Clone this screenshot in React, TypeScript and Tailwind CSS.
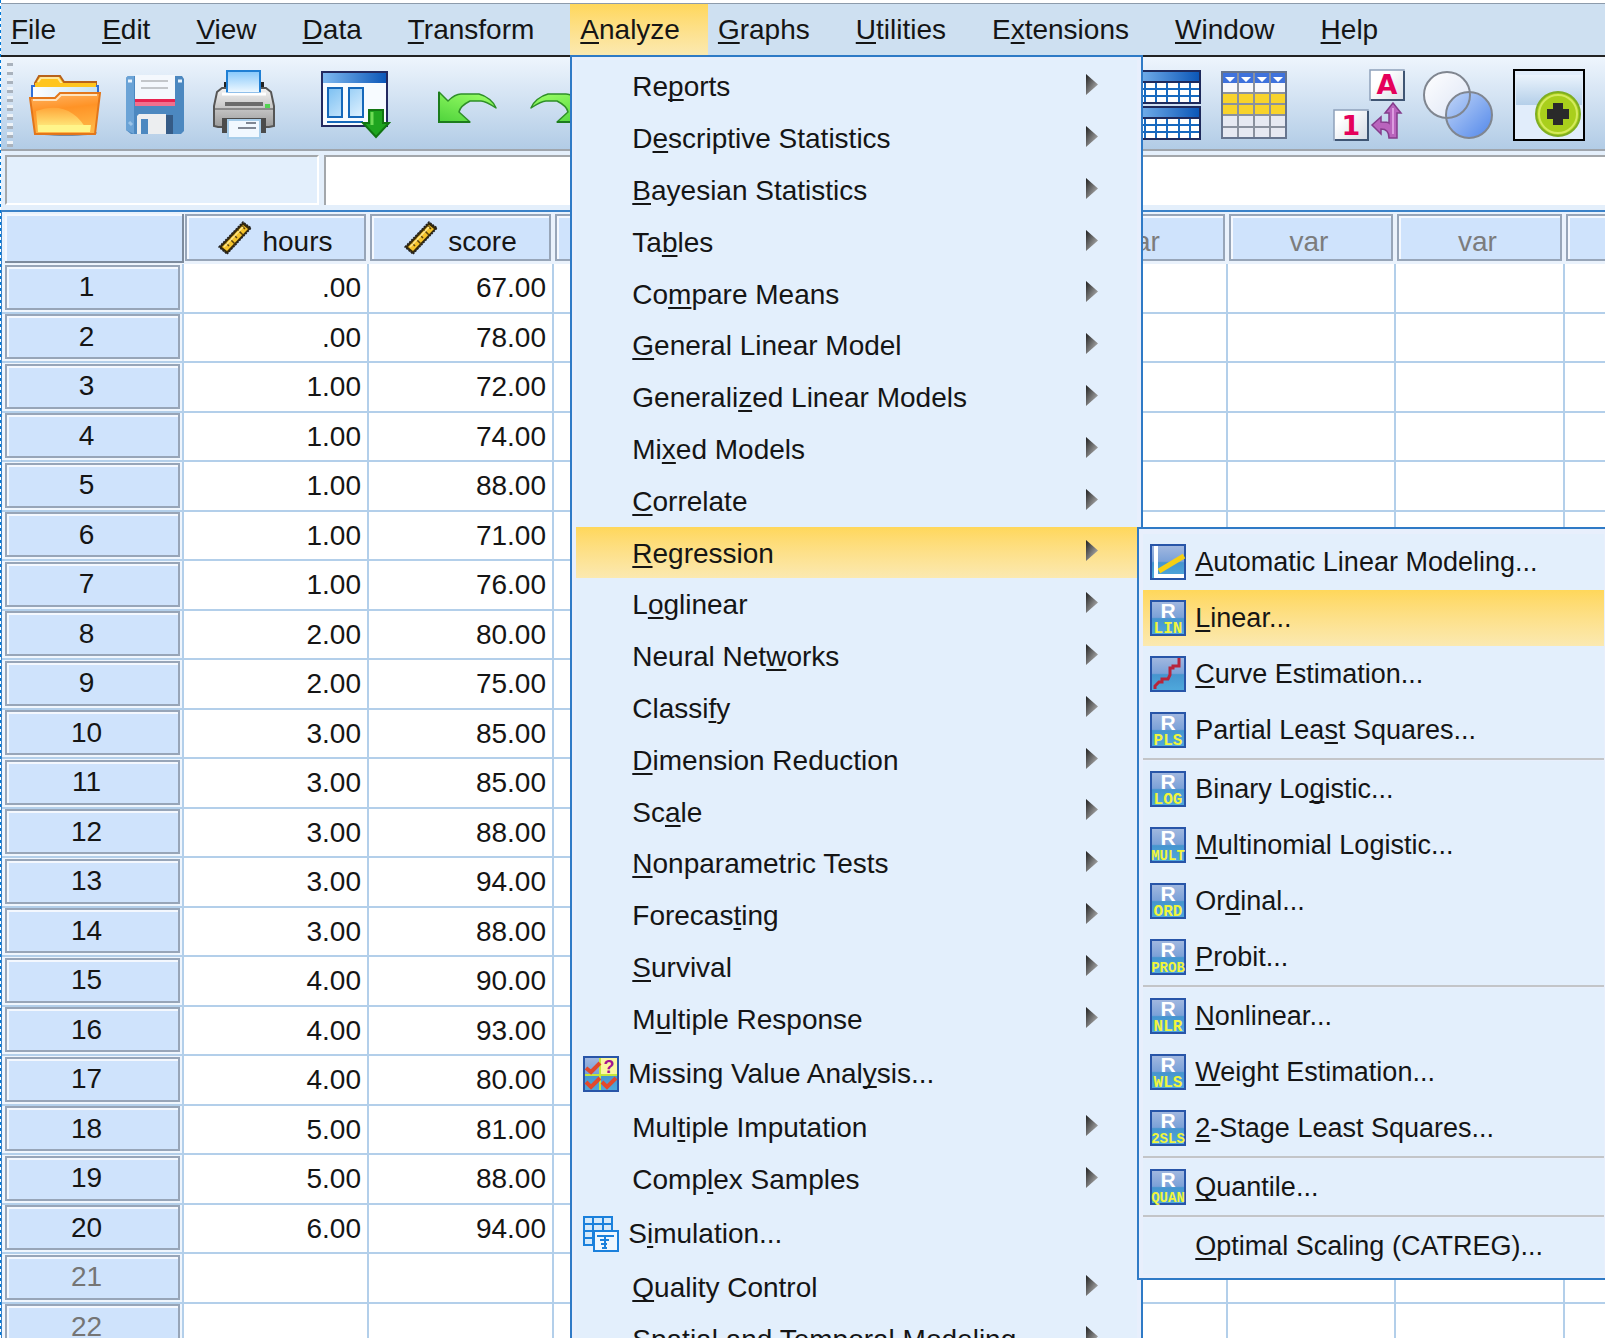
import type { ReactNode } from "react";
import clsx from "clsx";

const MENUS = [
  "&File", "&Edit", "&View", "&Data", "&Transform", "&Analyze",
  "&Graphs", "&Utilities", "E&xtensions", "&Window", "&Help",
];

type AnalyzeItem = { label: string; icon?: "missing" | "simulation"; open?: boolean };

const ANALYZE_ITEMS: AnalyzeItem[] = [
  { label: "Re&ports" },
  { label: "D&escriptive Statistics" },
  { label: "&Bayesian Statistics" },
  { label: "Ta&bles" },
  { label: "Co&mpare Means" },
  { label: "&General Linear Model" },
  { label: "Generali&zed Linear Models" },
  { label: "Mi&xed Models" },
  { label: "&Correlate" },
  { label: "&Regression", open: true },
  { label: "L&oglinear" },
  { label: "Neural Net&works" },
  { label: "Classi&fy" },
  { label: "&Dimension Reduction" },
  { label: "Sc&ale" },
  { label: "&Nonparametric Tests" },
  { label: "Forecas&ting" },
  { label: "&Survival" },
  { label: "M&ultiple Response" },
  { label: "Missing Value Anal&ysis...", icon: "missing" },
  { label: "Mul&tiple Imputation" },
  { label: "Comp&lex Samples" },
  { label: "S&imulation...", icon: "simulation" },
  { label: "&Quality Control" },
  { label: "Spatial and Temporal Modelin&g" },
];

type RegressionItem = { label: string; code?: string; active?: boolean; lineAfter?: boolean };

const REGRESSION_ITEMS: RegressionItem[] = [
  { label: "&Automatic Linear Modeling...", code: "auto" },
  { label: "&Linear...", code: "LIN", active: true },
  { label: "&Curve Estimation...", code: "curve" },
  { label: "Partial Lea&st Squares...", code: "PLS", lineAfter: true },
  { label: "Binary Lo&gistic...", code: "LOG" },
  { label: "&Multinomial Logistic...", code: "MULT" },
  { label: "Or&dinal...", code: "ORD" },
  { label: "&Probit...", code: "PROB", lineAfter: true },
  { label: "&Nonlinear...", code: "NLR" },
  { label: "&Weight Estimation...", code: "WLS" },
  { label: "&2-Stage Least Squares...", code: "2SLS", lineAfter: true },
  { label: "&Quantile...", code: "QUAN", lineAfter: true },
  { label: "&Optimal Scaling (CATREG)..." },
];

const DATA: [string, string][] = [
  [".00", "67.00"], [".00", "78.00"], ["1.00", "72.00"], ["1.00", "74.00"], ["1.00", "88.00"],
  ["1.00", "71.00"], ["1.00", "76.00"], ["2.00", "80.00"], ["2.00", "75.00"], ["3.00", "85.00"],
  ["3.00", "85.00"], ["3.00", "88.00"], ["3.00", "94.00"], ["3.00", "88.00"], ["4.00", "90.00"],
  ["4.00", "93.00"], ["4.00", "80.00"], ["5.00", "81.00"], ["5.00", "88.00"], ["6.00", "94.00"],
];

const ROW_COUNT = 22;
const EMPTY_COLS = [0, 1, 2, 3, 4, 5, 6];

// "&" marks the access key, as in native menus
function Mnemonic({ text }: { text: string }) {
  const i = text.indexOf("&");
  return (
    <span className="whitespace-pre">
      {text.slice(0, i)}
      <span className="underline decoration-2 underline-offset-3 [text-decoration-skip-ink:none]">{text[i + 1]}</span>
      {text.slice(i + 2)}
    </span>
  );
}

function Ruler() {
  return (
    <svg width="34" height="34" viewBox="0 0 34 34" aria-hidden="true">
      <path d="M1 26L25 1l8 6L9 33z" fill="#3a2c0a" stroke="#222" strokeWidth="1.5" strokeDasharray="2 1" />
      <path d="M4 26L25 4l5 4L9 30z" fill="#f5c32c" />
      <path d="M8 22l3 3M12 18l5 5M16 14l3 3M20 9l5 5M24 5l3 3" stroke="#5b420a" strokeWidth="1.5" />
      <path d="M6 26L25 6" stroke="#fde58a" strokeWidth="1.5" />
    </svg>
  );
}

function FolderIcon() {
  return (
    <svg width="72" height="64" viewBox="0 0 72 64" aria-hidden="true">
      <defs>
        <linearGradient id="folderFront" x1="0" y1="0" x2="0.2" y2="1">
          <stop offset="0" stopColor="#ffb668" />
          <stop offset="0.45" stopColor="#ff9326" />
          <stop offset="1" stopColor="#ffb545" />
        </linearGradient>
        <linearGradient id="folderGlow" x1="0" y1="0" x2="0" y2="1">
          <stop offset="0" stopColor="#ffa63a" />
          <stop offset="1" stopColor="#fffb8c" />
        </linearGradient>
        <linearGradient id="paper" x1="0" y1="0" x2="1" y2="0">
          <stop offset="0" stopColor="#fff" />
          <stop offset="1" stopColor="#c3e2f8" />
        </linearGradient>
      </defs>
      <ellipse cx="37" cy="60" rx="31" ry="3" fill="#4a5a70" opacity="0.6" />
      <path d="M6 22V10l4-7h21l4 6h32v14z" fill="#ffc51f" stroke="#b8621b" strokeWidth="2" />
      <path d="M9 9l3-4h17l4 6h30" fill="none" stroke="#ffe79a" strokeWidth="2" />
      <path d="M3 13h66v14H3z" fill="url(#paper)" stroke="#2f6fd8" strokeWidth="2" />
      <path d="M6 14V10h61v4z" fill="#ffc51f" />
      <path d="M1 25h25l5-5h40l-5 41H6z" fill="url(#folderFront)" stroke="#e2761b" strokeWidth="2" />
      <path d="M4 27h23l5-5h36" fill="none" stroke="#ffe3bd" strokeWidth="2" />
      <path d="M7 38c22-8 40-2 52 21H9z" fill="url(#folderGlow)" />
      <path d="M9 52h53l-1 7H9z" fill="#fff58a" />
    </svg>
  );
}

function SaveIcon() {
  return (
    <svg width="60" height="60" viewBox="0 0 60 60" aria-hidden="true">
      <path d="M3 1h54l2 3v52l-3 3H6l-5-4V3z" fill="#4c88c0" />
      <path d="M3 1h6v58l-8-4V3z" fill="#6ba3d6" />
      <path d="M10 0h40v31H10z" fill="#f4f8fd" />
      <path d="M10 24h40v3H10z" fill="#e8224f" />
      <path d="M10 27h40v4H10z" fill="#f1708d" />
      <path d="M16 6h27M16 13h27" stroke="#c3c6ca" strokeWidth="2" />
      <path d="M3 6h4M53 6h4" stroke="#e9f4fd" strokeWidth="3" />
      <path d="M41 40h7v19h-7z" fill="#355b86" />
      <path d="M12 41l2-2h27v20H12z" fill="#eceef0" />
      <path d="M16 44h7v15h-7z" fill="#4c88c0" />
      <path d="M4 47l3 3" stroke="#9cc4e8" strokeWidth="3" />
    </svg>
  );
}

function PrintIcon() {
  return (
    <svg width="62" height="70" viewBox="0 0 62 70" aria-hidden="true">
      <defs>
        <linearGradient id="printerBody" x1="0" y1="0" x2="0" y2="1">
          <stop offset="0" stopColor="#f3f3f3" />
          <stop offset="1" stopColor="#9b9b9b" />
        </linearGradient>
        <linearGradient id="printerSheet" x1="0" y1="0" x2="0" y2="1">
          <stop offset="0" stopColor="#86c8fb" />
          <stop offset="1" stopColor="#f2faff" />
        </linearGradient>
      </defs>
      <path d="M11 12h4v10h-4zM47 12h4v10h-4z" fill="#222" />
      <path d="M4 22l5-4h44l5 4 3 14v20l-5 1H5l-4-1V36z" fill="url(#printerBody)" stroke="#555" strokeWidth="2" />
      <path d="M14 1h33v22H14z" fill="url(#printerSheet)" stroke="#1f7fd4" strokeWidth="2" />
      <path d="M9 24h44" stroke="#fff" strokeWidth="3" />
      <path d="M12 34h38" stroke="#6b6b6b" strokeWidth="4" />
      <path d="M2 39h58" stroke="#777" strokeWidth="1.5" />
      <path d="M52 36h5" stroke="#52d352" strokeWidth="4" />
      <path d="M9 48h44v15H9z" fill="#4b4b4b" />
      <path d="M15 50h32v18H15z" fill="#f1f8ff" stroke="#a7cdea" strokeWidth="2" />
      <path d="M33 53h10M25 58h18" stroke="#7f8794" strokeWidth="2" />
    </svg>
  );
}

function RecallIcon() {
  return (
    <svg width="70" height="68" viewBox="0 0 70 68" aria-hidden="true">
      <defs>
        <linearGradient id="titleBar" x1="0" y1="0" x2="1" y2="0">
          <stop offset="0" stopColor="#7fb9f0" />
          <stop offset="1" stopColor="#0c57b8" />
        </linearGradient>
        <linearGradient id="pane" x1="0" y1="0" x2="1" y2="1">
          <stop offset="0" stopColor="#7cc0f2" />
          <stop offset="1" stopColor="#e0f2ff" />
        </linearGradient>
      </defs>
      <path d="M1 1h65v54H1z" fill="#f7fbff" stroke="#232a60" strokeWidth="2" />
      <path d="M2 2h63v10H2z" fill="url(#titleBar)" />
      <path d="M7 17h14v29H7zM28 17h14v29H28z" fill="url(#pane)" stroke="#1568ba" strokeWidth="2" />
      <path d="M6 51h36" stroke="#1568ba" strokeWidth="2" />
      <path d="M48 39h14v13h6L55 66 42 52h6z" fill="#1fa51f" stroke="#127512" strokeWidth="2" />
      <path d="M51 41v13" stroke="#6edc55" strokeWidth="3" />
    </svg>
  );
}

function CurvedArrow({ flip }: { flip?: boolean }) {
  return (
    <svg width="60" height="32" viewBox="0 0 60 32" className={flip ? "-scale-x-100" : undefined} aria-hidden="true">
      <defs>
        <linearGradient id="leaf" x1="0" y1="1" x2="0.6" y2="0">
          <stop offset="0" stopColor="#4fd33c" />
          <stop offset="1" stopColor="#93fa62" />
        </linearGradient>
      </defs>
      <path
        d="M1 1l9 9C14 6 19 3 23 3h18c8 2 15 8 17 14C52 13 47 10 43 10H32c-6 3-10 6-11 11l11 10H1z"
        fill="url(#leaf)"
        stroke="#2f8f28"
        strokeWidth="1.5"
        strokeLinejoin="round"
      />
      <path d="M1 1v30h31" fill="none" stroke="#1d7c1c" strokeWidth="2" />
    </svg>
  );
}

function SplitIcon() {
  return (
    <svg width="70" height="70" viewBox="0 0 70 70" aria-hidden="true">
      {[0, 36].map((y) => (
        <g key={y} transform={`translate(0 ${y})`}>
          <path d="M1 1h68v32H1z" fill="#fff" stroke="#1e2a5c" strokeWidth="2" />
          <path d="M2 2h66v9H2z" fill="url(#titleBar)" />
          <path d="M1 12h68" stroke="#1e2a5c" strokeWidth="2" />
          <path d="M2 19h66M2 26h66M14 13v19M25 13v19M36 13v19M48 13v19M59 13v19" stroke="#1769bf" strokeWidth="2" />
        </g>
      ))}
    </svg>
  );
}

function SelectCasesIcon() {
  return (
    <svg width="66" height="68" viewBox="0 0 66 68" aria-hidden="true">
      <path d="M1 1h64v66H1z" fill="#f7f8fb" stroke="#66758f" strokeWidth="2" />
      <path d="M1 1h64v11H1z" fill="#3f72dc" />
      <path d="M2 22h62v22H2z" fill="#f8d32b" />
      <path d="M2 44h62v23H2z" fill="#e6e9f2" />
      <path d="M1 22h64M1 33h64M1 44h64M1 56h64M17 1v66M33 1v66M49 1v66" stroke="#8a919e" strokeWidth="2" />
      <path d="M4 6h10l-5 5zM20 6h10l-5 5zM36 6h10l-5 5zM52 6h10l-5 5z" fill="#fff" />
      <path d="M1 1h64v66H1z" fill="none" stroke="#66758f" strokeWidth="2" />
    </svg>
  );
}

function ValueLabelsIcon() {
  return (
    <svg width="72" height="72" viewBox="0 0 72 72" aria-hidden="true">
      <defs>
        <linearGradient id="tile" x1="0" y1="0" x2="1" y2="1">
          <stop offset="0.4" stopColor="#fff" />
          <stop offset="1" stopColor="#b3bfd0" />
        </linearGradient>
      </defs>
      <path d="M37 1h34v30H37zM1 41h34v30H1z" fill="url(#tile)" stroke="#8fa1bb" strokeWidth="1.5" />
      <path d="M38 31h33V2M2 71h33V42" fill="none" stroke="#3f5573" strokeWidth="2" />
      <text x="54" y="25" textAnchor="middle" fontSize="27" className="fill-[#e5005a] font-[DejaVu_Sans] font-bold">A</text>
      <text x="18" y="66" textAnchor="middle" fontSize="27" className="fill-[#e5005a] font-[DejaVu_Sans] font-bold">1</text>
      <path
        d="M60 34l8 10h-4v25h-8c0-6-3-9-8-9v5l-9-9 9-8v5c4 0 7 0 8 1V44h-4z"
        fill="#b964bd"
        stroke="#843d8c"
        strokeWidth="1.5"
      />
      <path d="M60 39v26" stroke="#dc9ce0" strokeWidth="2" />
    </svg>
  );
}

function SetsIcon() {
  return (
    <svg width="70" height="68" viewBox="0 0 70 68" aria-hidden="true">
      <defs>
        <linearGradient id="setA" x1="0" y1="0" x2="1" y2="1">
          <stop offset="0" stopColor="#fff" />
          <stop offset="1" stopColor="#dce4f5" />
        </linearGradient>
        <linearGradient id="setB" x1="0" y1="0" x2="1" y2="1">
          <stop offset="0" stopColor="#c3d7f8" />
          <stop offset="1" stopColor="#5187ea" />
        </linearGradient>
      </defs>
      <circle cx="24" cy="24" r="23" fill="url(#setA)" />
      <circle cx="46" cy="44" r="23" fill="url(#setB)" />
      <circle cx="24" cy="24" r="23" fill="none" stroke="#808690" strokeWidth="2" />
      <circle cx="46" cy="44" r="23" fill="none" stroke="#808690" strokeWidth="2" />
    </svg>
  );
}

function AddIcon() {
  return (
    <svg width="72" height="72" viewBox="0 0 72 72" aria-hidden="true">
      <defs>
        <linearGradient id="addTop" x1="0" y1="0" x2="0" y2="1">
          <stop offset="0" stopColor="#eaf3fc" />
          <stop offset="1" stopColor="#b4cfe9" />
        </linearGradient>
      </defs>
      <path d="M1 1h70v70H1z" fill="#e1edfb" stroke="#000" strokeWidth="2" />
      <path d="M3 6h66v30H3z" fill="url(#addTop)" />
      <circle cx="45" cy="45" r="22" fill="#a9cf1c" stroke="#7fae22" strokeWidth="2" />
      <circle cx="45" cy="45" r="19" fill="none" stroke="#d4ea5c" strokeWidth="2" />
      <path d="M40 34h10v6h6v10h-6v6H40v-6h-6V40h6z" fill="#2a2a2a" />
    </svg>
  );
}

function RegressionIcon({ code }: { code?: string }) {
  if (!code) return <span className="size-9" />;
  return (
    <svg width="36" height="36" viewBox="0 0 36 36" className="shrink-0" aria-hidden="true">
      <defs>
        <linearGradient id="chip" x1="0" y1="0" x2="0" y2="1">
          <stop offset="0" stopColor="#a3b9e0" />
          <stop offset="0.48" stopColor="#7ba1d8" />
          <stop offset="0.52" stopColor="#4595cf" />
          <stop offset="1" stopColor="#4fa9dc" />
        </linearGradient>
      </defs>
      <path d="M1 1h34v34H1z" fill="url(#chip)" stroke="#2855a8" strokeWidth="2" />
      {code === "auto" && (
        <>
          <path d="M6 2v30h28" fill="none" stroke="#fff" strokeWidth="4" />
          <path d="M9 27L34 12" stroke="#f6cf12" strokeWidth="5" />
        </>
      )}
      {code === "curve" && (
        <path d="M5 33v-3l4-4h3v-3h6l2-4v-7h3v-2h6V2" fill="none" stroke="#b8243a" strokeWidth="3" />
      )}
      {code !== "auto" && code !== "curve" && (
        <>
          <text x="18" y="18" textAnchor="middle" fontSize="21" className="fill-white font-bold">R</text>
          <text
            x="18"
            y="33"
            textAnchor="middle"
            fontSize={code.length > 3 ? 14 : 16}
            className="fill-[#f1f53c] font-['Liberation_Mono',monospace] font-bold"
          >
            {code}
          </text>
        </>
      )}
    </svg>
  );
}

function MissingIcon() {
  return (
    <svg width="36" height="36" viewBox="0 0 36 36" className="shrink-0" aria-hidden="true">
      <path d="M1 1h34v34H1z" fill="url(#chip)" stroke="#2855a8" strokeWidth="2" />
      <path d="M18 2h16v16H18z" fill="#fbf7a0" />
      <path d="M2 19h32M17 2v32" stroke="#c5e63a" strokeWidth="2" />
      <text x="26" y="17" textAnchor="middle" fontSize="18" className="fill-[#a2148f] font-bold">?</text>
      <path d="M3 12l5 4 9-9M3 26l5 5 9-9M19 26l5 5 9-9" fill="none" stroke="#e2492c" strokeWidth="4" />
    </svg>
  );
}

function SimulationIcon() {
  return (
    <svg width="36" height="36" viewBox="0 0 36 36" className="shrink-0" aria-hidden="true">
      <path d="M1 1h28v28H1z" fill="#d5e9fa" stroke="#1a80dc" strokeWidth="2" />
      <path d="M1 8h28M1 15h28M1 22h28M10 1v28M20 1v28" stroke="#1a80dc" strokeWidth="2" />
      <path d="M11 15h24v20H11z" fill="#eff7fe" stroke="#1a80dc" strokeWidth="2" />
      <path d="M14 20h7M22 20h9M17 24h9M18 28h6M19 32h5M22 19v14" stroke="#1a80dc" strokeWidth="2" />
    </svg>
  );
}

function SubmenuArrow() {
  return (
    <svg width="12" height="21" viewBox="0 0 12 21" className="mb-[6px]" aria-hidden="true">
      <defs>
        <linearGradient id="arrow" x1="0" y1="0" x2="1" y2="1">
          <stop offset="0" stopColor="#1f1f1f" />
          <stop offset="1" stopColor="#c9c9c9" />
        </linearGradient>
      </defs>
      <path d="M0 0l12 10.5L0 21z" fill="url(#arrow)" />
    </svg>
  );
}

function ToolButton({ label, className, children }: { label: string; className?: string; children: ReactNode }) {
  return (
    <button type="button" aria-label={label} className={clsx("shrink-0", className)}>
      {children}
    </button>
  );
}

function RegressionMenu() {
  return (
    <div role="menu" className="absolute left-full top-0 z-20 w-[473px] border-2 border-[#2f7ac6] bg-[#e8effc] px-1 pb-1 pt-[5px]">
      {REGRESSION_ITEMS.map((item) => (
        <div key={item.label} role="none">
          <button
            type="button"
            role="menuitem"
            className={clsx(
              "flex h-14 w-full items-center gap-[9px] pl-[7px] text-[27px]",
              item.active ? "bg-linear-to-b from-[#ffd75a] to-[#fbe9b0]" : "bg-[#e3effc]"
            )}
          >
            <RegressionIcon code={item.code} />
            <Mnemonic text={item.label} />
          </button>
          {item.lineAfter && <div className="mb-px h-[2px] bg-[#c3c5c8]" />}
        </div>
      ))}
    </div>
  );
}

function AnalyzeMenu() {
  return (
    <div role="menu" className="absolute left-0 top-full z-10 w-[573px] border-2 border-[#2f7ac6] bg-[#e8effc] px-1 pt-[3px]">
      {ANALYZE_ITEMS.map((item) => (
        <div
          key={item.label}
          role="none"
          className={clsx("relative", item.icon ? "h-14" : "h-[52px] nth-[5n]:h-[51px]")}
        >
          <button
            type="button"
            role="menuitem"
            className={clsx(
              "flex h-full w-full items-center pr-[39px] pt-[2px]",
              item.icon ? "gap-[9px] pl-[7px]" : "justify-between pl-14",
              item.open ? "bg-linear-to-b from-[#ffd75a] to-[#fbe9b0]" : "bg-[#e3effc]"
            )}
          >
            {item.icon === "missing" && <MissingIcon />}
            {item.icon === "simulation" && <SimulationIcon />}
            <Mnemonic text={item.label} />
            {!item.icon && <SubmenuArrow />}
          </button>
          {item.open && <RegressionMenu />}
        </div>
      ))}
    </div>
  );
}

function MenuBar() {
  return (
    <nav className="mt-[3px] flex h-[54px] border-b-2 border-t border-b-[#222] border-t-[#8d9bab] bg-[#cee0f1]">
      {MENUS.map((menu) => {
        const active = menu === "&Analyze";
        return (
          <div key={menu} className="relative">
            <button
              type="button"
              className={clsx(
                "h-full pl-[10px]",
                active ? "bg-linear-to-b from-[#ffd75a] to-[#fbe9b0] pr-7" : "pr-9"
              )}
            >
              <Mnemonic text={menu} />
            </button>
            {active && <AnalyzeMenu />}
          </div>
        );
      })}
    </nav>
  );
}

function Toolbar() {
  return (
    <div className="flex h-[94px] items-center border-b-2 border-[#9fa5ac] bg-linear-to-b from-[#eef5fd] to-[#b2cce6] pl-[6px] pt-[3px]">
      <div className="h-full w-[6px] bg-[repeating-linear-gradient(to_bottom,#eef3f8_0_3px,#a9b2bd_3px_6px,transparent_6px_9px)]" />
      <ToolButton label="Open data document" className="ml-4"><FolderIcon /></ToolButton>
      <ToolButton label="Save this document" className="ml-6"><SaveIcon /></ToolButton>
      <ToolButton label="Print" className="ml-7"><PrintIcon /></ToolButton>
      <ToolButton label="Recall recently used dialogs" className="ml-[46px]"><RecallIcon /></ToolButton>
      <ToolButton label="Undo" className="ml-[47px] mt-1"><CurvedArrow /></ToolButton>
      <ToolButton label="Redo" className="ml-[31px] mt-1"><CurvedArrow flip /></ToolButton>
      <ToolButton label="Split file" className="ml-[542px]"><SplitIcon /></ToolButton>
      <ToolButton label="Select cases" className="ml-5"><SelectCasesIcon /></ToolButton>
      <ToolButton label="Value labels" className="ml-[46px]"><ValueLabelsIcon /></ToolButton>
      <ToolButton label="Use variable sets" className="ml-[18px]"><SetsIcon /></ToolButton>
      <ToolButton label="Customize toolbar" className="ml-5"><AddIcon /></ToolButton>
    </div>
  );
}

function HeaderBox({ className, children }: { className?: string; children?: ReactNode }) {
  return (
    <div
      className={clsx(
        "flex items-center justify-center border-2 border-[#97a5b8] bg-[#cfe3fc] shadow-[inset_2px_2px_0_#f4f8fe]",
        className
      )}
    >
      {children}
    </div>
  );
}

function DataGrid() {
  return (
    <div className="border-l border-t-2 border-[#3b82c8]">
      <table className="w-full min-w-[1733px] table-fixed border-separate border-spacing-0 bg-white">
        <colgroup>
          <col className="w-[182px]" />
          <col className="w-[185px]" />
          <col className="w-[185px]" />
          {/* the last column takes whatever is left */}
          {EMPTY_COLS.map((c) => (
            <col key={c} className={c === 6 ? undefined : c % 2 === 0 ? "w-[168px]" : "w-[169px]"} />
          ))}
        </colgroup>
        <thead>
          <tr className="h-[52px] bg-[#eaf2fc]">
            <td className="p-0 pb-px pl-[3px] pt-[2px]">
              <div className="h-[49px] border-b-2 border-r-2 border-[#7d8b9d] bg-[#cfe3fc] shadow-[inset_2px_2px_0_#f4f8fe]" />
            </td>
            {["hours", "score"].map((name) => (
              <th key={name} scope="col" className="p-0 pb-[3px] pl-px pr-[3px] pt-[2px] font-normal">
                <HeaderBox className="h-[47px] gap-[10px]">
                  <Ruler />
                  <span className="pt-2">{name}</span>
                </HeaderBox>
              </th>
            ))}
            {EMPTY_COLS.map((c) => (
              <th key={c} scope="col" className="p-0 pb-[3px] pl-px pr-[3px] pt-[2px] font-normal text-[#7c7c7c]">
                <HeaderBox className="h-[47px] pr-1">
                  <span className="pt-2">var</span>
                </HeaderBox>
              </th>
            ))}
          </tr>
        </thead>
        <tbody>
          {Array.from({ length: ROW_COUNT }, (_, r) => {
            const row = DATA[r];
            return (
              <tr key={r} className="odd:h-[50px] even:h-[49px]">
                <th
                  scope="row"
                  className={clsx(
                    "border-b-2 border-r-2 border-[#b3cfea] bg-[#f0f6fd] p-0 pb-[2px] pl-[3px] pr-[2px] font-normal",
                    !row && "text-[#757575]"
                  )}
                >
                  <HeaderBox className="h-[45px] pr-3">{r + 1}</HeaderBox>
                </th>
                {[0, 1].map((c) => (
                  <td key={c} className="border-b-2 border-r-2 border-[#b3cfea] p-0 pr-[6px] text-right">
                    {row?.[c]}
                  </td>
                ))}
                {EMPTY_COLS.map((c) => (
                  <td key={c} className="border-b-2 border-r-2 border-[#b3cfea] p-0" />
                ))}
              </tr>
            );
          })}
        </tbody>
      </table>
    </div>
  );
}

export default function App() {
  return (
    <div className="flex h-screen overflow-hidden bg-white font-['Liberation_Sans',Arial,sans-serif] text-[28px] leading-8 text-[#151515]">
      <div className="w-px shrink-0 bg-[repeating-linear-gradient(to_bottom,#0078d7_0_3px,#fff_3px_6px)]" />
      <div className="min-w-0 flex-1">
        <MenuBar />
        <Toolbar />
        <div className="flex h-[59px] gap-[5px] bg-[#e4effb] pb-[5px] pl-1 pt-1">
          <input
            readOnly
            aria-label="Cell name"
            className="w-[314px] shrink-0 border-2 border-b-white border-l-[#a3a7ab] border-r-white border-t-[#a3a7ab] bg-[#e3effc]"
          />
          <input
            readOnly
            aria-label="Cell value"
            className="min-w-0 flex-1 border-l-2 border-t-2 border-[#a3a7ab] bg-white"
          />
        </div>
        <DataGrid />
      </div>
    </div>
  );
}
